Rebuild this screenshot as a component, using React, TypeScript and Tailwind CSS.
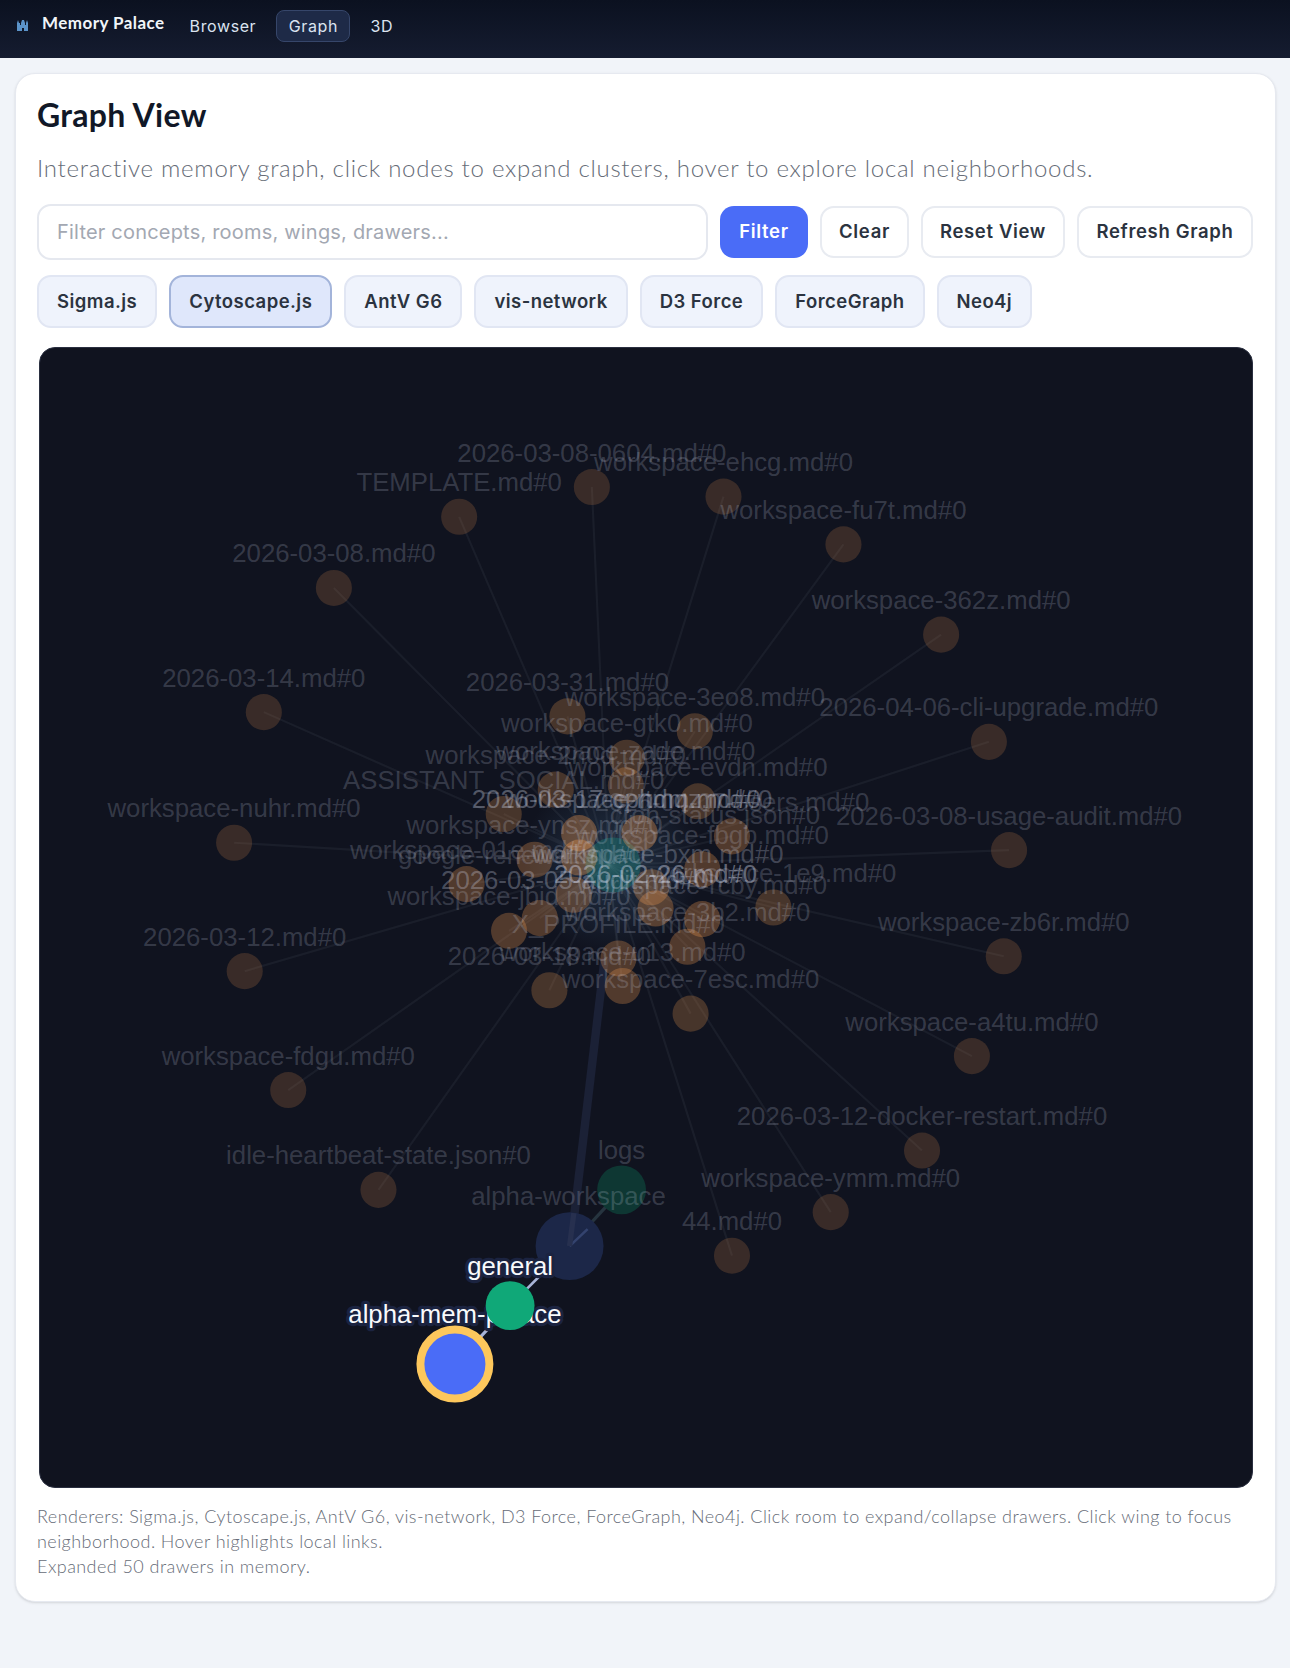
import React from 'react';

type GraphNode = { x: number; y: number; label: string; lx?: number; ly?: number; o?: number; f?: number };

const CENTER = { x: 572, y: 812 };

const drawers: GraphNode[] = [
  { x: 556, y: 456, label: '2026-03-08-0604.md#0' },
  { x: 680, y: 465, label: 'workspace-ehcg.md#0' },
  { x: 431, y: 484, label: 'TEMPLATE.md#0' },
  { x: 793, y: 510, label: 'workspace-fu7t.md#0' },
  { x: 313, y: 551, label: '2026-03-08.md#0' },
  { x: 885, y: 595, label: 'workspace-362z.md#0' },
  { x: 247, y: 668, label: '2026-03-14.md#0' },
  { x: 533, y: 672, label: '2026-03-31.md#0', f: 0.26 },
  { x: 653, y: 686, label: 'workspace-3eo8.md#0', f: 0.26 },
  { x: 930, y: 696, label: '2026-04-06-cli-upgrade.md#0' },
  { x: 589, y: 711, label: 'workspace-gtk0.md#0', f: 0.26 },
  { x: 219, y: 791, label: 'workspace-nuhr.md#0' },
  { x: 949, y: 798, label: '2026-03-08-usage-audit.md#0' },
  { x: 944, y: 898, label: 'workspace-zb6r.md#0' },
  { x: 229, y: 912, label: '2026-03-12.md#0' },
  { x: 914, y: 992, label: 'workspace-a4tu.md#0' },
  { x: 270, y: 1024, label: 'workspace-fdgu.md#0' },
  { x: 867, y: 1081, label: '2026-03-12-docker-restart.md#0' },
  { x: 355, y: 1118, label: 'idle-heartbeat-state.json#0' },
  { x: 781, y: 1139, label: 'workspace-ymm.md#0' },
  { x: 688, y: 1180, label: '44.md#0' },
  { x: 649, y: 952, label: 'workspace-7esc.md#0', f: 0.26 },
  { x: 646, y: 889, label: 'workspace-3b2.md#0', f: 0.3 },
  { x: 585, y: 926, label: 'workspace-u13.md#0', f: 0.3 },
  { x: 516, y: 930, label: '2026-03-18.md#0', f: 0.26 },
  { x: 581, y: 900, label: 'X_PROFILE.md#0', f: 0.3 },
  { x: 522, y: 741, label: 'workspace-2n0d.md#0', f: 0.26 },
  { x: 588, y: 737, label: 'workspace-zade.md#0', f: 0.26 },
  { x: 656, y: 752, label: 'workspace-evdn.md#0', f: 0.26 },
  { x: 473, y: 764, label: 'ASSISTANT_SOCIAL.md#0', f: 0.26 },
  { x: 544, y: 782, label: '2026-03-17-cphdm.md#0', lx: 579, o: 0.34, f: 0.36 },
  { x: 601, y: 782, label: 'workspace-rtmqz.md#0', lx: 600, o: 0.28, f: 0.36 },
  { x: 688, y: 785, label: '2026-04-07-users.md#0', f: 0.3 },
  { x: 502, y: 807, label: 'workspace-ynsz.md#0', f: 0.3 },
  { x: 544, y: 805, label: 'cron-status.json#0', lx: 672, ly: 765, f: 0.36 },
  { x: 660, y: 816, label: 'workspace-fbgb.md#0', f: 0.3 },
  { x: 438, y: 830, label: 'workspace-01e.md#0', lx: 444, f: 0.3 },
  { x: 539, y: 840, label: 'google-renewal.md#0', lx: 490, ly: 803, f: 0.3 },
  { x: 612, y: 833, label: 'workspace-bxm.md#0', lx: 618, ly: 802, o: 0.26, f: 0.3 },
  { x: 727, y: 852, label: 'workspace-1e9.md#0', f: 0.26 },
  { x: 616, y: 853, label: '2026-02-26.md#0', o: 0.42, f: 0.32 },
  { x: 660, y: 863, label: 'workspace-rcby.md#0', f: 0.32 },
  { x: 507, y: 862, label: '2026-03-05-audit.md#0', lx: 540, ly: 827, o: 0.3, f: 0.3 },
  { x: 478, y: 874, label: 'workspace-jbid.md#0', f: 0.3 },
];

const Graph = () => (
  <svg viewBox="36.7 325 1140.6 1072.9" className="block h-full w-full">
    <defs>
      <radialGradient id="haze">
        <stop offset="0%" stopColor="#3a5a78" stopOpacity="0.45" />
        <stop offset="100%" stopColor="#3a5a78" stopOpacity="0" />
      </radialGradient>
    </defs>
    <circle cx="575" cy="810" r="85" fill="url(#haze)" />
    <g stroke="#94a3b8" strokeOpacity="0.08" strokeWidth="2">
      {drawers.map((n) => (
        <line key={n.label} x1={CENTER.x} y1={CENTER.y} x2={n.x} y2={n.y} />
      ))}
    </g>
    <polygon points="564,900 572,900 540,1171 532,1171" fill="#1b2136" />
    <line x1="535" y1="1171" x2="584" y2="1118" stroke="#26343f" strokeWidth="3" />
    <line x1="427" y1="1282" x2="479" y2="1227" stroke="#a8b4d8" strokeWidth="3" />
    <line x1="479" y1="1227" x2="535" y2="1171" stroke="#a8b4d8" strokeWidth="2.5" />
    <circle cx="576" cy="812" r="26" fill="#1a6a68" fillOpacity="0.55" />
    <circle cx="535" cy="1171" r="32" fill="#1c2748" />
    <line x1="535" y1="1171" x2="552" y2="1155" stroke="#34436e" strokeWidth="2.5" />
    <line x1="535" y1="1171" x2="539" y2="1140" stroke="#27304f" strokeWidth="5" />
    <circle cx="584" cy="1118" r="23" fill="#0e3733" />
    <g fill="#e8954f">
      {drawers.map((n) => (
        <circle key={n.label} cx={n.x} cy={n.y} r="17" fillOpacity={n.f ?? 0.19} />
      ))}
    </g>
    <g fontFamily="'Liberation Sans', Arial, sans-serif" fontSize="24.25" textAnchor="middle" fill="#d5dcf0">
      {drawers.map((n) => (
        <text
          key={n.label}
          x={n.lx ?? n.x}
          y={(n.ly ?? n.y - 32) + 8}
          fillOpacity={n.o ?? 0.2}
        >
          {n.label}
        </text>
      ))}
      <text x="584" y="1089" fillOpacity="0.2">logs</text>
      <text x="534" y="1132" fillOpacity="0.2">alpha-workspace</text>
    </g>
    <g fontFamily="'Liberation Sans', Arial, sans-serif" fontSize="24.25" textAnchor="middle" fill="#f8fafc" stroke="#1b2340" strokeWidth="6" paintOrder="stroke" strokeLinejoin="round">
      <text x="427" y="1243">alpha-mem-palace</text>
    </g>
    <circle cx="479" cy="1227" r="23" fill="#10a878" />
    <g fontFamily="'Liberation Sans', Arial, sans-serif" fontSize="24.25" textAnchor="middle" fill="#f8fafc" stroke="#1b2340" strokeWidth="6" paintOrder="stroke" strokeLinejoin="round">
      <text x="479" y="1198">general</text>
    </g>
    <circle cx="427" cy="1282" r="32.5" fill="#4a6cf7" stroke="#fdc75c" strokeWidth="7.5" />
  </svg>
);

const renderers = ['Sigma.js', 'Cytoscape.js', 'AntV G6', 'vis-network', 'D3 Force', 'ForceGraph', 'Neo4j'];

const App = () => {
  return (
    <div className="min-h-[1668px] bg-[#f1f4f9] font-['Inter',sans-serif]">
      <header className="flex h-[58px] items-center bg-gradient-to-b from-[#0b1120] to-[#151c30] pb-2 pl-4">
        <svg viewBox="0 0 14 12" className="h-3 w-[14px]">
          <path d="M1 12V4l1-3 1 3h1V6h1V4l1-3h2l1 3v2h1V4l1-3 1 3v8H8V9H6v3z" fill="#5b93c9" />
        </svg>
        <span className="mb-1 ml-[12px] mr-[25px] font-['Lato',sans-serif] text-[17px] font-bold tracking-[0.45px] text-[#f1f5f9]">
          Memory Palace
        </span>
        <nav className="flex items-center gap-5 pt-0.5 text-[16px] tracking-[0.6px] text-[#dbe3f0]">
          <span>Browser</span>
          <span className="flex h-8 items-center rounded-lg border border-[#36466a] bg-[#1e2a47] px-[11.5px]">Graph</span>
          <span>3D</span>
        </nav>
      </header>

      <main className="mt-[15px] mr-[14px] ml-[15px] h-[1529px] rounded-[20px] border border-[#e6e9f0] bg-white px-[21px] pt-[22px] shadow-sm">
        <h1 className="font-['Lato',sans-serif] text-[32px] leading-[38px] font-bold tracking-[0.3px] text-[#111827]">Graph View</h1>
        <p className="mt-[18px] font-['Lato',sans-serif] text-[24px] leading-8 font-light tracking-[0.73px] text-[#666c77]">
          Interactive memory graph, click nodes to expand clusters, hover to explore local neighborhoods.
        </p>

        <div className="mt-5 flex items-center gap-3">
          <div className="flex h-[56px] w-[671px] items-center rounded-[14px] border-2 border-[#e5e8ef] bg-white pl-[18px] text-[20px] tracking-[0.2px] text-[#a3a8b2]">
            Filter concepts, rooms, wings, drawers...
          </div>
          <button className="h-[52px] w-[88px] rounded-[14px] bg-[#4a6cf7] text-[18.5px] font-semibold tracking-[0.65px] text-white">Filter</button>
          <button className="h-[52px] w-[89px] rounded-[14px] border-2 border-[#e8ebf1] bg-white text-[18.5px] font-semibold tracking-[0.65px] text-[#2b3340]">Clear</button>
          <button className="h-[52px] w-[144px] rounded-[14px] border-2 border-[#e8ebf1] bg-white text-[18.5px] font-semibold tracking-[0.65px] text-[#2b3340]">Reset View</button>
          <button className="h-[52px] w-[176px] rounded-[14px] border-2 border-[#e8ebf1] bg-white text-[18.5px] font-semibold tracking-[0.65px] text-[#2b3340]">Refresh Graph</button>
        </div>

        <div className="mt-[15px] flex gap-3">
          {renderers.map((name) => (
            <button
              key={name}
              className={
                name === 'Cytoscape.js'
                  ? 'h-[53px] rounded-[14px] border-2 border-[#a3b4da] bg-[#dfe7fb] px-[18px] text-[18.5px] font-semibold tracking-[0.45px] text-[#2b3340]'
                  : 'h-[53px] rounded-[14px] border-2 border-[#e1e6f3] bg-[#eff3fc] px-[18px] text-[18.5px] font-semibold tracking-[0.45px] text-[#2b3340]'
              }
            >
              {name}
            </button>
          ))}
        </div>

        <div className="mt-[19px] mr-px ml-[2px] h-[1141px] overflow-hidden rounded-[16px] border border-[#2a2f40] bg-[#10131f]">
          <Graph />
        </div>

        <p className="mt-4 font-['Lato',sans-serif] text-[18px] leading-[25px] font-light tracking-[0.44px] text-[#666c77]">
          Renderers: Sigma.js, Cytoscape.js, AntV G6, vis-network, D3 Force, ForceGraph, Neo4j. Click room to expand/collapse drawers. Click wing to focus neighborhood. Hover highlights local links.
          <br />
          Expanded 50 drawers in memory.
        </p>
      </main>
    </div>
  );
};

export default App;
